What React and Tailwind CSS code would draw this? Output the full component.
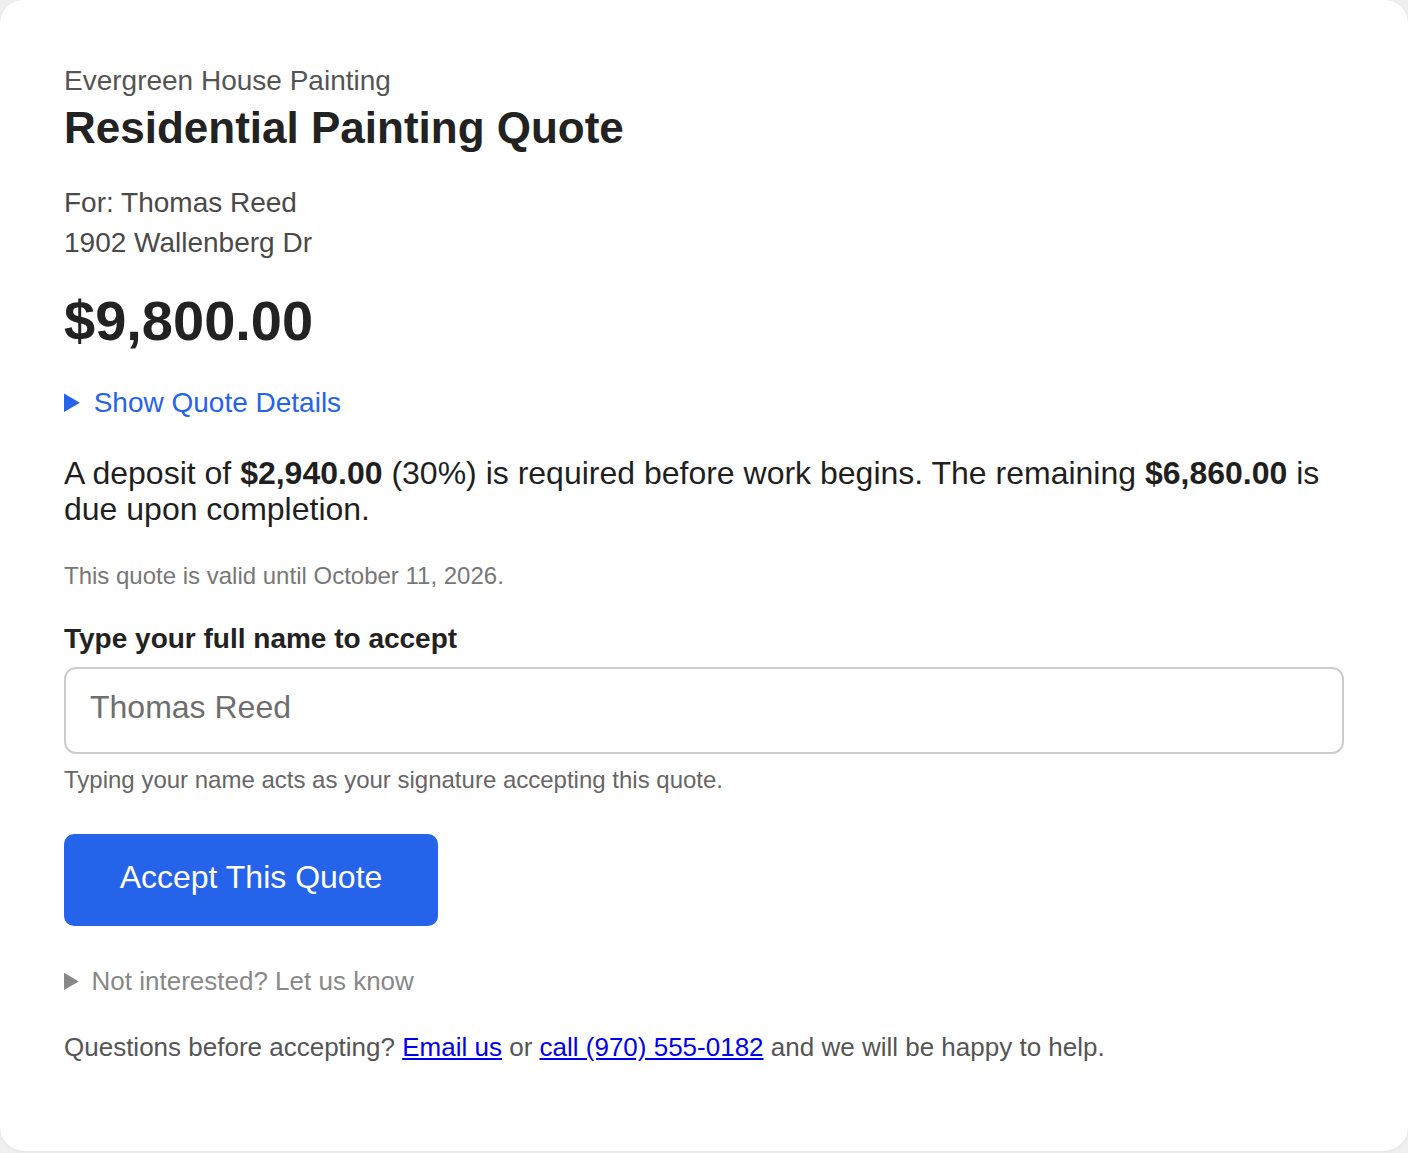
export default function App() {
  return (
    <div
      className="min-h-screen bg-[#efefef]"
      style={{ fontFamily: '"Liberation Sans", Arial, sans-serif' }}
    >
      <div className="bg-white rounded-[24px] shadow-[0_1px_3px_rgba(0,0,0,0.06)] px-16 pt-[65px] pb-[86px]">
        <div className="text-[28px] leading-[32px] text-[#555]">Evergreen House Painting</div>
        <h1 className="mt-[5px] text-[44px] leading-[52px] font-bold text-[#222]">
          Residential Painting Quote
        </h1>

        <div className="mt-[29px] text-[28px] leading-[40px] text-[#4a4a4a]">
          <div>For: Thomas Reed</div>
          <div>1902 Wallenberg Dr</div>
        </div>

        <div className="mt-[26px] text-[56px] leading-[64px] font-bold text-[#222]">$9,800.00</div>

        <details className="mt-[30px] text-[28px] leading-[40px] text-[#2563eb]">
          <summary className="cursor-pointer">Show Quote Details</summary>
        </details>

        <p className="mt-[32px] text-[32px] leading-[36px] text-[#1f1f1f]">
          A deposit of <strong>$2,940.00</strong> (30%) is required before work begins. The remaining{" "}
          <strong>$6,860.00</strong> is due upon completion.
        </p>

        <p className="mt-[33px] text-[24px] leading-[32px] text-[#777]">
          This quote is valid until October 11, 2026.
        </p>

        <label className="block mt-[29px] text-[28px] leading-[36px] font-bold text-[#222]">
          Type your full name to accept
        </label>
        <input
          type="text"
          placeholder="Thomas Reed"
          className="mt-[10px] block w-full h-[87px] border-2 border-[#cccccc] rounded-[12px] px-6 pt-0 pb-[6px] text-[32px] text-[#333] placeholder:text-[#6e6e6e] outline-none"
        />
        <p className="mt-[10px] text-[24px] leading-[32px] text-[#666]">
          Typing your name acts as your signature accepting this quote.
        </p>

        <button className="mt-[38px] h-[92px] w-[374px] pb-[6px] rounded-[10px] bg-[#2563eb] text-white text-[32px]">
          Accept This Quote
        </button>

        <details className="mt-[37px] text-[26px] leading-[36px] text-[#888]">
          <summary className="cursor-pointer">Not interested? Let us know</summary>
        </details>

        <p className="mt-[30px] text-[26px] leading-[36px] text-[#555]">
          Questions before accepting?{" "}
          <a href="#" className="text-[#0000ee] underline">
            Email us
          </a>{" "}
          or{" "}
          <a href="#" className="text-[#0000ee] underline">
            call (970) 555-0182
          </a>{" "}
          and we will be happy to help.
        </p>
      </div>
    </div>
  );
}
